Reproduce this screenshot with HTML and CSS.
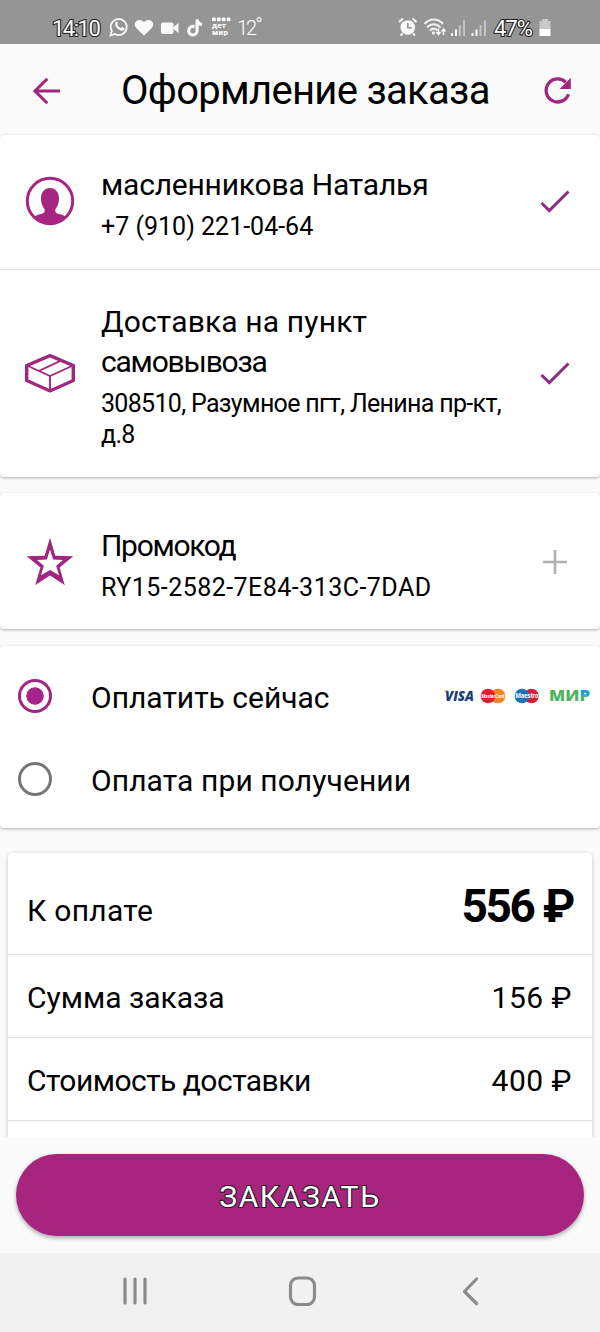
FILE: index.html
```html
<!DOCTYPE html>
<html lang="ru">
<head>
<meta charset="utf-8">
<title>Оформление заказа</title>
<link rel="stylesheet" href="styles.css">
</head>
<body>
<div class="status">
  <span class="outlined clock">14:10</span>
  <svg class="status-icons" width="138" height="24" viewBox="0 0 138 24">
    <g fill="none" stroke="#f8f8f8" stroke-width="1.8">
      <path d="M1.5 19.5 2.8 15A8 8 0 1 1 5.8 18Z"/>
    </g>
    <path fill="#f8f8f8" d="M6.5 6.3c1-1.2 1.8-.8 2.3.7.4 1.1-.8 1.6-.3 2.3.7 1.2 1.7 2.1 3.1 2.7.8.3 1.1-1.3 2-.9l1.8 1c.7.4-.1 2.4-1.9 2.6C9.700 15.100 4.800 9.800 6.500 6.300Z"/>
    <path fill="#f8f8f8" d="M35 19.800 27.200 12C22.500 6.500 30.300.6 35 6.200c4.700-5.600 12.500.3 7.800 5.800Z"/>
    <rect x="52" y="6.500" width="12.500" height="11.500" rx="2" fill="#f8f8f8"/>
    <path fill="#f8f8f8" d="m64.500 11 5-4v10l-5-4Z"/>
    <path fill="none" stroke="#f8f8f8" stroke-width="3.200" d="M85.500 10.800a4.200 4.200 0 1 0 2.600 3.900V3.500c.3 3 2 4.700 5 5"/>
    <g fill="#f8f8f8"><rect x="103" y="1.500" width="3.800" height="3.800" rx="1"/><rect x="107.900" y="1.500" width="3.800" height="3.800" rx="1"/><rect x="112.800" y="1.500" width="3.800" height="3.800" rx="1"/><rect x="117.700" y="1.500" width="3.800" height="3.800" rx="1"/></g>
    <text class="mini" x="103" y="12" textLength="14">дет</text>
    <text class="mini" x="103" y="18.500" textLength="16">мир</text>
  </svg>
  <span class="temp">12<span class="degree">°</span></span>
  <svg class="signals" width="90" height="24" viewBox="0 0 90 24">
    <g fill="none" stroke="#f8f8f8" stroke-width="2"><path d="M1 6 5 2.500M14.500 2.500 18.500 6M4.500 17.500l-2 2M15 17.500l2 2"/></g>
    <circle cx="9.800" cy="11.500" r="7.300" fill="#f8f8f8"/>
    <path d="M9.800 7v4.700h4" fill="none" stroke="#959595" stroke-width="1.600"/>
    <g fill="none" stroke="#f0f0f0" stroke-width="2"><path d="M26.500 8c5-6 13.500-6 18.500 0M29 11.500c4-4.500 9.500-4.500 13.500 0M32 14.500c2.500-2.500 5-2.500 7.500 0"/></g>
    <circle cx="35.500" cy="17" r="1.700" fill="#f0f0f0"/>
    <path d="M40.500 12.500V18m-2-2 2 2.500 2-2.500M45.500 19v-5.500m-2 2 2-2.500 2 2.500" fill="none" stroke="#f8f8f8" stroke-width="1.500"/>
    <g fill="#f8f8f8"><path d="M53 17h2v3h-2zM57 13.500h2V20h-2zM73.500 17h2v3h-2zM77.500 13.500h2V20h-2z"/></g>
    <g fill="#c4c4c4"><path d="M60.800 9h2v11h-2zM65 4.500h2V20h-2zM81.500 9h2v11h-2zM86 4.500h2V20h-2z"/></g>
  </svg>
  <span class="outlined percent">47%</span>
  <svg class="battery" width="12" height="18" viewBox="0 0 12 18"><path fill="#c9c9c9" d="M3 0h6v2h2.500v9H.5V2H3Z"/><path fill="#fff" d="M.5 10h11v7H.5Z"/></svg>
</div>

<header class="header">
  <svg class="back" width="28" height="28" viewBox="0 0 28 28"><path d="M27 14H2M14.300 1.800 2 14l12.300 12.200" fill="none" stroke="#a0267f" stroke-width="3"/></svg>
  <h1 class="title">Оформление заказа</h1>
  <svg class="reload" width="30" height="30" viewBox="0 0 30 30"><path d="M23.700 6.200A11.500 11.500 0 1 0 26.500 18.300" fill="none" stroke="#a0267f" stroke-width="3.300"/><path fill="#a0267f" d="M28.800 1.800V13H17.500Z"/></svg>
</header>

<section class="card">
  <div class="row customer">
    <svg class="row-icon" width="50" height="50" viewBox="0 0 50 50"><circle cx="25" cy="25" r="22.700" fill="none" stroke="#a62580" stroke-width="3"/><path fill="#a62580" d="M25 12c5.500 0 9 4.500 9 10.500 0 4.500-1.500 8-3.500 10.500-.8 4 1.500 4.500 4.500 5.200 3 .6 4.500 1.500 6 3A23.500 23.500 0 0 1 9 41.200c1.500-1.500 3-2.400 6-3 3-.7 5.300-1.200 4.500-5.200-2-2.500-3.500-6-3.500-10.500C16 16.500 19.500 12 25 12Z"/></svg>
    <div class="info"><div class="name fit-name">масленникова Наталья</div><div class="detail">+7 (910) 221-04-64</div></div>
    <svg class="mark" width="32" height="28" viewBox="0 0 32 28"><path d="m2.500 15 7.800 7.600L29.500 3.500" fill="none" stroke="#8f2c7d" stroke-width="3"/></svg>
  </div>
  <div class="row delivery">
    <svg class="row-icon" width="50" height="50" viewBox="0 0 50 50"><g fill="none" stroke="#a0267f"><path stroke-width="3.400" d="M25 7.600 48.300 17.500v15L25 43 1.700 32.500v-15Z"/><path stroke-width="1.900" d="M2 17.500 25 28l23-10.500M25 28v15M13.800 23 36.500 12.300"/></g></svg>
    <div class="info"><div class="name"><span class="fit-delivery">Доставка на пункт</span><br><span class="fit-self">самовывоза</span></div><div class="detail"><span class="fit-address">308510, Разумное пгт, Ленина пр-кт,</span><br><span class="fit-address">д.8</span></div></div>
    <svg class="mark" width="32" height="28" viewBox="0 0 32 28"><path d="m2.500 15 7.800 7.600L29.500 3.500" fill="none" stroke="#8f2c7d" stroke-width="3"/></svg>
  </div>
</section>

<section class="card promo-card">
  <div class="row promo">
    <svg class="row-icon" width="50" height="50" viewBox="0 0 50 50"><path fill="#a0267f" fill-rule="evenodd" d="M25 .7 30.300 18.700 48.300 19.300 34.600 30.500 39.700 48 25 38.500 10.300 48 15.400 30.500 1.700 19.300 19.700 18.700ZM25 12.500 21.900 22.500 12 22.900 18.800 28.700 16 38.300 25 33 34 38.300 31.200 28.700 38 22.900 28.100 22.500Z"/></svg>
    <div class="info"><div class="name fit-promo">Промокод</div><div class="detail fit-code">RY15-2582-7E84-313C-7DAD</div></div>
    <svg class="mark" width="32" height="28" viewBox="0 0 32 28"><path d="M16 2v24M4 14h24" stroke="#b0b0b0" stroke-width="2.600"/></svg>
  </div>
</section>

<section class="card payment">
  <div class="option">
    <span class="radio checked"></span><span class="label">Оплатить сейчас</span>
    <svg class="brands" width="150" height="20" viewBox="0 0 150 20">
      <defs><linearGradient id="mir-blue" gradientUnits="userSpaceOnUse" x1="0" y1="4" x2="0" y2="16"><stop offset=".42" stop-color="#169fd5"/><stop offset=".42" stop-color="#4db45e"/></linearGradient></defs>
      <path fill="#e9a23b" d="M1.500 4.500h4l1 3.500Z"/>
      <text class="visa" x="3" y="15" textLength="29" lengthAdjust="spacingAndGlyphs">VISA</text>
      <circle cx="56" cy="10" r="7.300" fill="#f58220"/><circle cx="46" cy="10" r="7.300" fill="#e81c2e"/>
      <text class="brand-name" x="39.500" y="12" textLength="23" lengthAdjust="spacingAndGlyphs">MasterCard</text>
      <circle cx="89.500" cy="10" r="7.300" fill="#d3203a"/><circle cx="80" cy="10" r="7.300" fill="#1c72b8"/>
      <text class="brand-name maestro" x="73.500" y="12.300" textLength="23" lengthAdjust="spacingAndGlyphs">Maestro</text>
      <text class="mir" x="107" y="15.300" textLength="41" lengthAdjust="spacingAndGlyphs">МИ<tspan fill="url(#mir-blue)">Р</tspan></text>
    </svg>
  </div>
  <div class="option">
    <span class="radio"></span><span class="label fit-later">Оплата при получении</span>
  </div>
</section>

<section class="summary">
  <div class="sum-row total"><span class="fit-total">К оплате</span><span class="amount">556 ₽</span></div>
  <div class="sum-row"><span>Сумма заказа</span><span class="price">156 ₽</span></div>
  <div class="sum-row"><span class="fit-cost">Стоимость доставки</span><span class="price">400 ₽</span></div>
</section>

<footer class="footer"><button class="order"><span class="outlined">ЗАКАЗАТЬ</span></button></footer>

<nav class="nav">
  <svg width="30" height="30" viewBox="0 0 30 30"><path d="M5 3v24M15 3v24M25 3v24"/></svg>
  <svg width="30" height="30" viewBox="0 0 30 30"><rect x="2.500" y="2" width="24" height="26.500" rx="7.500"/></svg>
  <svg width="30" height="30" viewBox="0 0 30 30"><path d="M21.500 3 9.500 15.500l12 12"/></svg>
</nav>
</body>
</html>
```
FILE: styles.css
```css
* { box-sizing: border-box; }
body { margin: 0; width: 600px; height: 1332px; overflow: hidden; background: #fafafa; color: #000; font-family: Roboto, "Noto Sans", sans-serif; display: flex; flex-direction: column; }
svg, span, button { flex: none; }
svg { display: block; }

.status { height: 44px; flex: none; background: #959595; display: flex; align-items: flex-start; padding: 16px 0 0 52px; color: #fff; }
.outlined { color: #fff; -webkit-text-stroke: 2.2px #222; paint-order: stroke fill; }
.clock { width: 57px; font-size: 22px; line-height: 25px; letter-spacing: -1.5px; }
.temp { width: 31px; margin-left: -10px; font-size: 20px; line-height: 24px; letter-spacing: -2px; font-weight: 300; white-space: nowrap; }
.degree { position: relative; top: -3px; }
.mini { font-size: 8px; font-weight: 900; fill: #f8f8f8; }
.signals { margin-left: 130px; }
.percent { width: 45px; margin-left: 6px; font-size: 22px; line-height: 25px; letter-spacing: -1px; }
.battery { margin-top: 3px; }

.header { height: 91px; flex: none; display: flex; align-items: flex-start; padding: 33px 28px 0 33px; }
.title { flex: 1; margin: -9px 0 0 60px; font-size: 40px; font-weight: 400; line-height: 46px; letter-spacing: -.7px; white-space: nowrap; }
.reload { margin-top: -1px; }

.card { flex: none; background: #fff; border-radius: 4px; box-shadow: 0 1px 3px rgba(0,0,0,.3); }
.row { display: flex; padding: 0 29px 0 25px; }
.customer { height: 135px; padding-top: 30px; border-bottom: 1px solid #e0e0e0; }
.delivery { height: 207px; padding-top: 32px; }
.row-icon { margin-right: 26px; }
.customer .row-icon { margin-top: 11px; }
.delivery .row-icon { margin-top: 46px; }
.promo .row-icon { margin-top: 11px; }
.info { flex: 1; min-width: 0; white-space: nowrap; }
.name { font-size: 30px; line-height: 40px; }
.detail { font-size: 25px; line-height: 31px; margin-top: 6px; }
.fit-name { letter-spacing: -.2px; }
.fit-delivery { letter-spacing: .15px; }
.fit-self { letter-spacing: -1.2px; }
.fit-address { letter-spacing: -.68px; }
.fit-promo { letter-spacing: -1.3px; }
.fit-code { letter-spacing: .46px; }
.fit-later { letter-spacing: .1px; }
.fit-total { letter-spacing: .3px; }
.fit-cost { letter-spacing: -.52px; }
.customer .mark { margin-top: 23px; }
.delivery .mark { margin-top: 58px; }
.promo .mark { margin-top: 22px; }
.promo-card { margin-top: 16px; }
.promo { height: 136px; padding-top: 33px; }

.payment { margin-top: 17px; height: 182px; padding: 8px 8px 0 18px; }
.option { height: 83px; display: flex; align-items: center; }
.radio { width: 34px; height: 34px; border: 3px solid #757575; border-radius: 50%; }
.radio.checked { border-color: #a0267f; background: radial-gradient(circle, #a9248a 8.3px, #fff 9px); }
.label { margin: 4px auto 0 39px; font-size: 30px; line-height: 40px; white-space: nowrap; }
.visa { font: italic 900 13.5px "Open Sans", sans-serif; fill: #1b3f7c; }
.brand-name { font: bold 5.500px Roboto, sans-serif; fill: #fff; }
.maestro { font-size: 7px; }
.mir { font: 900 15.500px "Open Sans", sans-serif; fill: #4db45e; }

.summary { flex: none; width: 584px; height: 284px; margin: 25px 8px 0; background: #fff; border-radius: 4px 4px 0 0; box-shadow: 0 1px 4px rgba(0,0,0,.22); clip-path: inset(-4px -4px 0 -4px); }
.sum-row { height: 83px; border-bottom: 1px solid #e0e0e0; padding: 23px 20px 0 19px; display: flex; justify-content: space-between; font-size: 30px; line-height: 40px; white-space: nowrap; }
.total { height: 102px; padding-top: 38px; }
.amount { font-size: 46px; font-weight: 700; line-height: 30px; letter-spacing: -2.3px; margin-right: -1px; }
.price { letter-spacing: .5px; }

.footer { height: 116px; flex: none; padding: 17px 16px 0; }
.order { width: 568px; height: 82px; padding: 2px 0 0; border: 0; border-radius: 41px; background: #a7247f; box-shadow: 0 2px 4px rgba(0,0,0,.35); font: 400 30px Roboto, sans-serif; letter-spacing: 1.6px; }
.nav { height: 79px; flex: none; background: #f1f1f1; display: flex; justify-content: space-between; align-items: center; padding: 0 115px 3px 120px; }
.nav svg { fill: none; stroke: #8b8b8b; stroke-width: 3.200px; stroke-linecap: round; stroke-linejoin: round; }
```
